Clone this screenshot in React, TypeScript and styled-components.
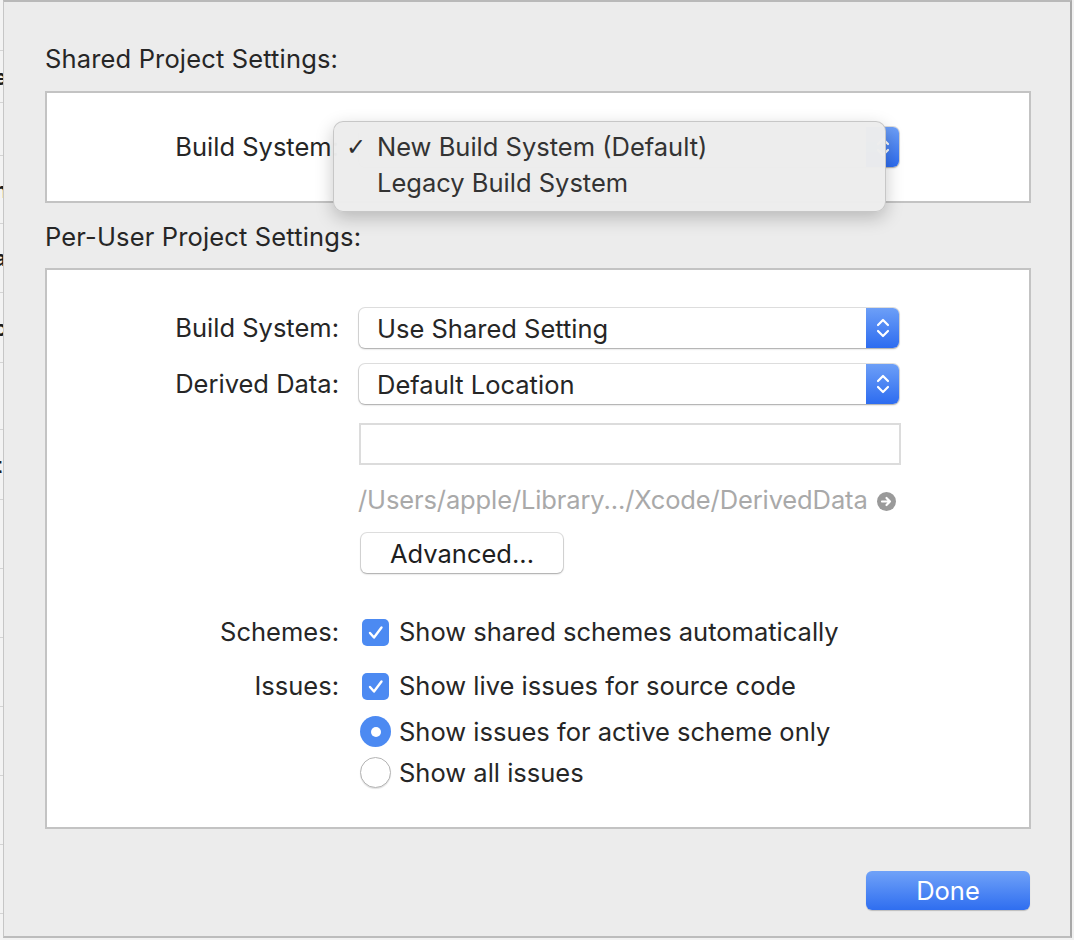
import styled, { createGlobalStyle } from 'styled-components';

const GlobalStyle = createGlobalStyle`
  html, body {
    margin: 0;
    padding: 0;
  }
  body {
    background: #ececec;
    font-family: Inter, "Liberation Sans", sans-serif;
    color: #262626;
  }
`;

const TEXT = '25.5px';

const Screen = styled.div`
  display: flex;
  width: 1074px;
  height: 940px;
  overflow: hidden;
  background: #f2f2f2;
`;

const BackStrip = styled.div`
  flex: 0 0 3px;
  display: flex;
  flex-direction: column;
  overflow: hidden;
  background: #f3f3f3;
`;

const BackRow = styled.div<{ $h: number }>`
  flex: 0 0 ${(p) => p.$h}px;
  display: flex;
  align-items: center;
  border-bottom: 1px solid #d4d4d4;
  font-size: 22px;
  font-weight: 700;
  color: #1c1c1c;
  white-space: nowrap;
  text-indent: -6px;
  overflow: hidden;
`;

const SideEdge = styled.div`
  flex: 0 0 2px;
  background: #f0f0f0;
`;

const Sheet = styled.main`
  flex: 1;
  display: flex;
  flex-direction: column;
  margin-bottom: 2px;
  padding: 42px 39px 0 41px;
  background: #ececec;
  border-top: 2px solid #b9b9b9;
  border-left: 1px solid #c6c6c6;
  border-right: 2px solid #a8a8a8;
  border-bottom: 2px solid #bcbcbc;
`;

const SectionTitle = styled.h2<{ $mt?: number }>`
  margin: ${(p) => p.$mt ?? 0}px 0 0;
  font-size: ${TEXT};
  line-height: 30px;
  font-weight: 400;
  letter-spacing: 0.15px;
  color: #262626;
`;

const Panel = styled.section<{ $mt: number; $pad: string }>`
  position: relative;
  margin-top: ${(p) => p.$mt}px;
  padding: ${(p) => p.$pad};
  background: #fff;
  border: 2px solid #c3c3c3;
`;

const FormRow = styled.div<{ $mt?: number; $h?: number }>`
  display: grid;
  grid-template-columns: 292px 540px;
  column-gap: 20px;
  align-items: center;
  margin-top: ${(p) => p.$mt ?? 0}px;
  min-height: ${(p) => p.$h ?? 30}px;
`;

const Label = styled.span`
  text-align: right;
  font-size: ${TEXT};
  line-height: 30px;
  white-space: nowrap;
`;

const Popup = styled.div`
  display: flex;
  height: 40px;
  width: 540px;
  background: #fff;
  border-radius: 6px;
  box-shadow: 0 0 0 1px rgba(0, 0, 0, 0.12), 0 1px 2px rgba(0, 0, 0, 0.25);
  overflow: hidden;
`;

const PopupText = styled.span`
  flex: 1;
  display: flex;
  align-items: center;
  padding-left: 18px;
  font-size: ${TEXT};
`;

const PopupArrows = styled.span`
  flex: 0 0 33px;
  display: flex;
  align-items: center;
  justify-content: center;
  background: linear-gradient(#6d9ff7, #2d6cf0);
`;

const TextField = styled.div`
  width: 538px;
  height: 38px;
  background: #fff;
  border: 2px solid #dcdcdc;
`;

const PathLine = styled.div`
  display: flex;
  align-items: center;
  margin-left: -1px;
  font-size: ${TEXT};
  line-height: 30px;
  letter-spacing: -0.12px;
  color: #a9a9a9;
  white-space: nowrap;
  svg {
    margin-left: 9px;
    margin-top: 3px;
  }
`;

const PushButton = styled.button`
  width: 202px;
  height: 40px;
  margin-left: 2px;
  padding: 0;
  background: #fff;
  border: none;
  border-radius: 6px;
  box-shadow: 0 0 0 1px rgba(0, 0, 0, 0.12), 0 1px 2px rgba(0, 0, 0, 0.25);
  font-family: inherit;
  font-size: ${TEXT};
  color: #1e1e1e;
`;

const Option = styled.div`
  display: flex;
  align-items: center;
  font-size: ${TEXT};
  line-height: 30px;
  white-space: nowrap;
`;

const Mark = styled.span`
  flex: 0 0 40px;
  display: flex;
  align-items: center;
`;

const CheckBox = styled.span`
  display: flex;
  align-items: center;
  justify-content: center;
  width: 27px;
  height: 27px;
  margin-left: 3px;
  border-radius: 5px;
  background: #4c8af2;
`;

const Radio = styled.span<{ $on: boolean }>`
  display: flex;
  align-items: center;
  justify-content: center;
  box-sizing: border-box;
  width: 31px;
  height: 31px;
  margin-left: 1px;
  border-radius: 50%;
  background: ${(p) => (p.$on ? '#4c8af2' : '#fff')};
  border: ${(p) => (p.$on ? 'none' : '1px solid #b4b4b4')};
  box-shadow: ${(p) => (p.$on ? 'none' : '0 1px 1px rgba(0,0,0,.12)')};
  &::after {
    content: '';
    display: ${(p) => (p.$on ? 'block' : 'none')};
    width: 10px;
    height: 10px;
    border-radius: 50%;
    background: #fff;
  }
`;

const Menu = styled.div`
  position: absolute;
  left: 286px;
  top: 28px;
  width: 551px;
  padding: 7px 0 10px;
  background: rgba(237, 237, 237, 0.98);
  border: 1px solid rgba(0, 0, 0, 0.16);
  border-radius: 10px;
  box-shadow: 0 6px 18px rgba(0, 0, 0, 0.22);
`;

const MenuItem = styled.div`
  position: relative;
  padding-left: 43px;
  font-size: ${TEXT};
  line-height: 36px;
  color: #333;
`;

const Tick = styled.span`
  position: absolute;
  left: 12px;
  top: 0;
  font-family: "DejaVu Sans", sans-serif;
  font-size: 24px;
  color: #2e2e2e;
`;

const Footer = styled.div`
  display: flex;
  justify-content: flex-end;
  margin-top: 42px;
`;

const DoneButton = styled.button`
  width: 164px;
  height: 39px;
  margin-right: 1px;
  padding: 0;
  border: none;
  border-radius: 6px;
  background: linear-gradient(#70a2f8, #2f6ef0);
  box-shadow: 0 1px 1px rgba(0, 0, 0, 0.2);
  font-family: inherit;
  font-size: ${TEXT};
  color: #fff;
`;

const Arrows = () => (
  <svg width="16" height="26" viewBox="0 0 16 26">
    <path d="M3 10 L8 5 L13 10 M3 16 L8 21 L13 16" fill="none" stroke="#fff" strokeWidth="2.2" strokeLinecap="round" strokeLinejoin="round" />
  </svg>
);

const GoArrow = () => (
  <svg width="19" height="19" viewBox="0 0 19 19">
    <circle cx="9.5" cy="9.5" r="9.5" fill="#9a9a9a" />
    <path d="M5 9.5 H13 M9.5 6 L13 9.5 L9.5 13" fill="none" stroke="#fff" strokeWidth="2.2" strokeLinecap="round" strokeLinejoin="round" />
  </svg>
);

const Check = () => (
  <svg width="27" height="27" viewBox="0 0 27 27">
    <path d="M8 14 L12 18.5 L19.5 8.5" fill="none" stroke="#fff" strokeWidth="2.4" strokeLinecap="round" strokeLinejoin="round" />
  </svg>
);

const PopupButton = ({ value }: { value: string }) => (
  <Popup>
    <PopupText>{value}</PopupText>
    <PopupArrows><Arrows /></PopupArrows>
  </Popup>
);

// the window behind the sheet: a sliver of its table shows at the left edge
const backRows: { h: number; glyph?: string }[] = [
  { h: 50 }, { h: 51, glyph: 'e' }, { h: 52 }, { h: 67, glyph: 'n' }, { h: 68, glyph: 'a' },
  { h: 69, glyph: 'c' }, { h: 66 }, { h: 69, glyph: 't' }, { h: 68 }, { h: 68 },
  { h: 68 }, { h: 68 }, { h: 68 }, { h: 68 },
];

export default function App() {
  return (
    <>
      <GlobalStyle />
      <Screen>
        <BackStrip>
          {backRows.map((r, i) => (
            <BackRow key={i} $h={r.h}>{r.glyph ?? ''}</BackRow>
          ))}
        </BackStrip>
        <Sheet>
          <SectionTitle>Shared Project Settings:</SectionTitle>
          <Panel $mt={17} $pad="34px 0">
            <FormRow>
              <Label>Build System:</Label>
              <PopupButton value="New Build System (Default)" />
            </FormRow>
            <Menu>
              <MenuItem><Tick>✓</Tick>New Build System (Default)</MenuItem>
              <MenuItem>Legacy Build System</MenuItem>
            </Menu>
          </Panel>

          <SectionTitle $mt={19}>Per-User Project Settings:</SectionTitle>
          <Panel $mt={16} $pad="38px 0 39px">
            <FormRow>
              <Label>Build System:</Label>
              <PopupButton value="Use Shared Setting" />
            </FormRow>
            <FormRow $mt={16}>
              <Label>Derived Data:</Label>
              <PopupButton value="Default Location" />
            </FormRow>
            <FormRow $mt={19}>
              <span />
              <TextField />
            </FormRow>
            <FormRow $mt={20}>
              <span />
              <PathLine>/Users/apple/Library.../Xcode/DerivedData<GoArrow /></PathLine>
            </FormRow>
            <FormRow $mt={18}>
              <span />
              <div><PushButton>Advanced...</PushButton></div>
            </FormRow>
            <FormRow $mt={44}>
              <Label>Schemes:</Label>
              <Option><Mark><CheckBox><Check /></CheckBox></Mark>Show shared schemes automatically</Option>
            </FormRow>
            <FormRow $mt={24}>
              <Label>Issues:</Label>
              <Option><Mark><CheckBox><Check /></CheckBox></Mark>Show live issues for source code</Option>
            </FormRow>
            <FormRow $mt={15}>
              <span />
              <Option><Mark><Radio $on /></Mark>Show issues for active scheme only</Option>
            </FormRow>
            <FormRow $mt={10}>
              <span />
              <Option><Mark><Radio $on={false} /></Mark>Show all issues</Option>
            </FormRow>
          </Panel>

          <Footer>
            <DoneButton>Done</DoneButton>
          </Footer>
        </Sheet>
        <SideEdge />
      </Screen>
    </>
  );
}
